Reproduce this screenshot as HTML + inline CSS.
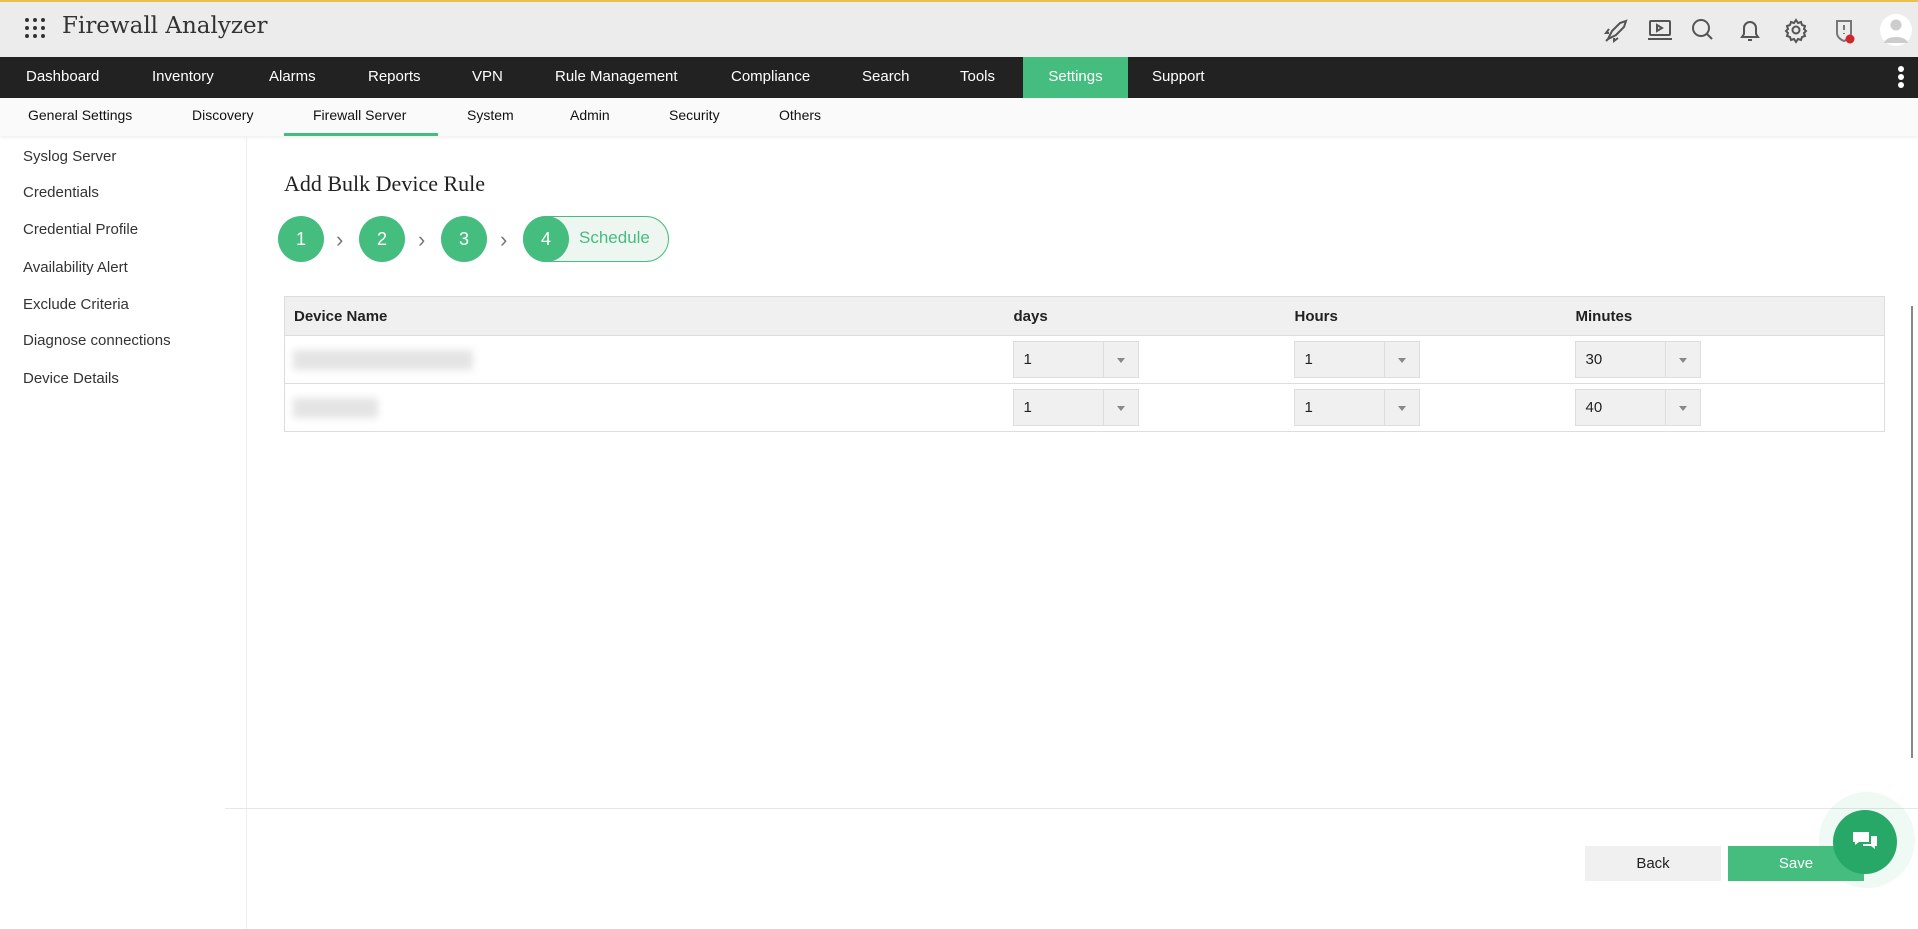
<!DOCTYPE html>
<html><head><meta charset="utf-8"><style>
*{margin:0;padding:0;box-sizing:border-box}
body{width:1918px;height:929px;overflow:hidden;background:#fff;font-family:"Liberation Sans",sans-serif;position:relative;color:#222}
.top{position:absolute;left:0;top:0;width:1918px;height:57px;background:#ececec;border-top:2px solid #e8c04a}
.logo{position:absolute;left:62px;top:11px;font-family:"DejaVu Serif","Liberation Serif",serif;font-size:23px;color:#333;font-weight:300;letter-spacing:0}
.nav{position:absolute;left:0;top:57px;width:1918px;height:41px;background:#222}
.nav span{position:absolute;top:11px;color:#fff;font-size:15px}
.nav .act{top:0;height:41px;background:#45bd7f;padding:11px 0;text-align:center;width:105px}
.sub{position:absolute;left:0;top:98px;width:1918px;height:38px;background:#fafafa;box-shadow:0 2px 3px rgba(0,0,0,.06)}
.sub span{position:absolute;top:9px;font-size:14px;color:#111}
.side{position:absolute;left:0;top:136px;width:247px;bottom:0;border-right:1px solid #eee}
.side div{position:absolute;left:23px;font-size:15px;color:#333}
.title{position:absolute;left:284px;top:171px;font-family:"Liberation Serif",serif;font-size:22px;color:#222}
.c{position:absolute;top:216px;width:46px;height:46px;border-radius:50%;background:#45bd7f;color:#fff;font-size:18px;text-align:center;line-height:46px}
.ar{position:absolute;top:227px;color:#777;font-size:22px}
table{position:absolute;left:284px;top:296px;width:1601px;border-collapse:collapse;border:1px solid #ddd}
th{background:#f0f0f0;height:39px;text-align:left;font-size:15px;font-weight:bold;color:#222;border-bottom:1px solid #ddd;padding-left:9px}
td{height:48px;border-bottom:1px solid #ddd;padding-left:8px;vertical-align:middle}
.sel{width:126px;height:37px;background:#f0f0f0;border:1px solid #ddd;position:relative;font-size:15px;padding:9px 10px}
.sel:after{content:"";position:absolute;right:0;top:0;width:34px;height:35px;border-left:1px solid #ddd}
.sel i{position:absolute;right:13px;top:16px;border:4px solid transparent;border-top:5px solid #888;border-bottom:0}
.blur{height:20px;background:#e4e4e4;filter:blur(4px)}
.btn{position:absolute;top:846px;width:136px;height:35px;font-size:15px;text-align:center;line-height:35px}
</style></head><body>
<div class="top">
<svg style="position:absolute;left:24px;top:15px" width="22" height="22"><g fill="#333"><circle cx="3" cy="3" r="2"/><circle cx="11" cy="3" r="2"/><circle cx="19" cy="3" r="2"/><circle cx="3" cy="11" r="2"/><circle cx="11" cy="11" r="2"/><circle cx="19" cy="11" r="2"/><circle cx="3" cy="19" r="2"/><circle cx="11" cy="19" r="2"/><circle cx="19" cy="19" r="2"/></g></svg>
<div class="logo">Firewall Analyzer</div>
<svg style="position:absolute;left:1600px;top:11px" width="318" height="36" fill="none" stroke="#555" stroke-width="2">
<path d="M8 26l4-8 8-8 6-2-2 6-8 8-8 4zM9 20l-3 0 3-4M14 25l0 3 4-3M6 28l3-3"/>
<rect x="50" y="8" width="20" height="14" rx="1"/><path d="M57 12v6l5-3z M48 26h24"/>
<circle cx="101" cy="15" r="8"/><path d="M107 21l5 5"/>
<path d="M142 24h16l-2-3v-6a6 6 0 0 0-12 0v6zM148 27h4"/>
<circle cx="196" cy="17" r="3.5"/><path d="M196 7l2 3 3-1 1 3 3 1-1 3 2 2-2 2 1 3-3 1-1 3-3-1-2 3-2-3-3 1-1-3-3-1 1-3-2-2 2-2-1-3 3-1 1-3 3 1z"/>
<path d="M237 8h14v12c0 4-4 7-7 8-3-1-7-4-7-8z" stroke="#777"/><path d="M244 12v5M244 20v1" stroke="#777"/>
<circle cx="250" cy="26" r="4.5" fill="#d0262e" stroke="none"/>
<circle cx="296" cy="17" r="16" fill="#fff" stroke="none"/><circle cx="296" cy="12" r="5.5" fill="#ccc" stroke="none"/><path d="M284 30c2-8 22-8 24 0z" fill="#ccc" stroke="none"/>
</svg>
</div>
<div class="nav">
<span style="left:26px">Dashboard</span><span style="left:152px">Inventory</span><span style="left:269px">Alarms</span><span style="left:368px">Reports</span><span style="left:472px">VPN</span><span style="left:555px">Rule Management</span><span style="left:731px">Compliance</span><span style="left:862px">Search</span><span style="left:960px">Tools</span><span class="act" style="left:1023px">Settings</span><span style="left:1152px">Support</span>
<svg style="position:absolute;left:1897px;top:8px" width="8" height="26" fill="#fff"><circle cx="4" cy="4" r="3"/><circle cx="4" cy="12" r="3"/><circle cx="4" cy="20" r="3"/></svg>
</div>
<div class="sub">
<span style="left:28px">General Settings</span><span style="left:192px">Discovery</span><span style="left:313px">Firewall Server</span><span style="left:467px">System</span><span style="left:570px">Admin</span><span style="left:669px">Security</span><span style="left:779px">Others</span>
<div style="position:absolute;left:284px;top:35px;width:154px;height:3px;background:#45bd7f"></div>
</div>
<div class="side">
<div style="top:12px">Syslog Server</div><div style="top:48px">Credentials</div><div style="top:85px">Credential Profile</div><div style="top:123px">Availability Alert</div><div style="top:160px">Exclude Criteria</div><div style="top:196px">Diagnose connections</div><div style="top:234px">Device Details</div>
</div>
<div class="title">Add Bulk Device Rule</div>
<div class="c" style="left:278px">1</div><div class="ar" style="left:336px">›</div>
<div class="c" style="left:359px">2</div><div class="ar" style="left:418px">›</div>
<div class="c" style="left:441px">3</div><div class="ar" style="left:500px">›</div>
<div style="position:absolute;left:523px;top:216px;width:146px;height:46px;border-radius:23px;background:#eef6f1;border:1px solid #45bd7f"></div>
<div class="c" style="left:523px">4</div>
<div style="position:absolute;left:579px;top:228px;font-size:17px;color:#45bd7f">Schedule</div>
<table>
<tr><th style="width:720px">Device Name</th><th style="width:281px">days</th><th style="width:281px">Hours</th><th>Minutes</th></tr>
<tr><td><div class="blur" style="width:180px"></div></td><td><div class="sel">1<i></i></div></td><td><div class="sel">1<i></i></div></td><td><div class="sel">30<i></i></div></td></tr>
<tr><td><div class="blur" style="width:85px"></div></td><td><div class="sel">1<i></i></div></td><td><div class="sel">1<i></i></div></td><td><div class="sel">40<i></i></div></td></tr>
</table>
<div style="position:absolute;left:225px;top:808px;width:1693px;height:1px;background:#e6e6e6"></div>
<div class="btn" style="left:1585px;background:#f0f0f0;color:#222">Back</div>
<div class="btn" style="left:1728px;background:#45bd7f;color:#fff">Save</div>
<div style="position:absolute;left:1911px;top:306px;width:2px;height:452px;background:#888"></div>
<div style="position:absolute;left:1819px;top:792px;width:96px;height:96px;border-radius:50%;background:rgba(69,189,127,.08)"></div>
<div style="position:absolute;left:1833px;top:810px;width:64px;height:64px;border-radius:50%;background:#28a866"></div>
<svg style="position:absolute;left:1851px;top:829px" width="30" height="26" fill="#fff"><path d="M2 3h16v10H8l-4 3v-3H2z"/><path d="M20 7h6v10h-2v3l-4-3h-8v-2h8z"/></svg>
</body></html>
